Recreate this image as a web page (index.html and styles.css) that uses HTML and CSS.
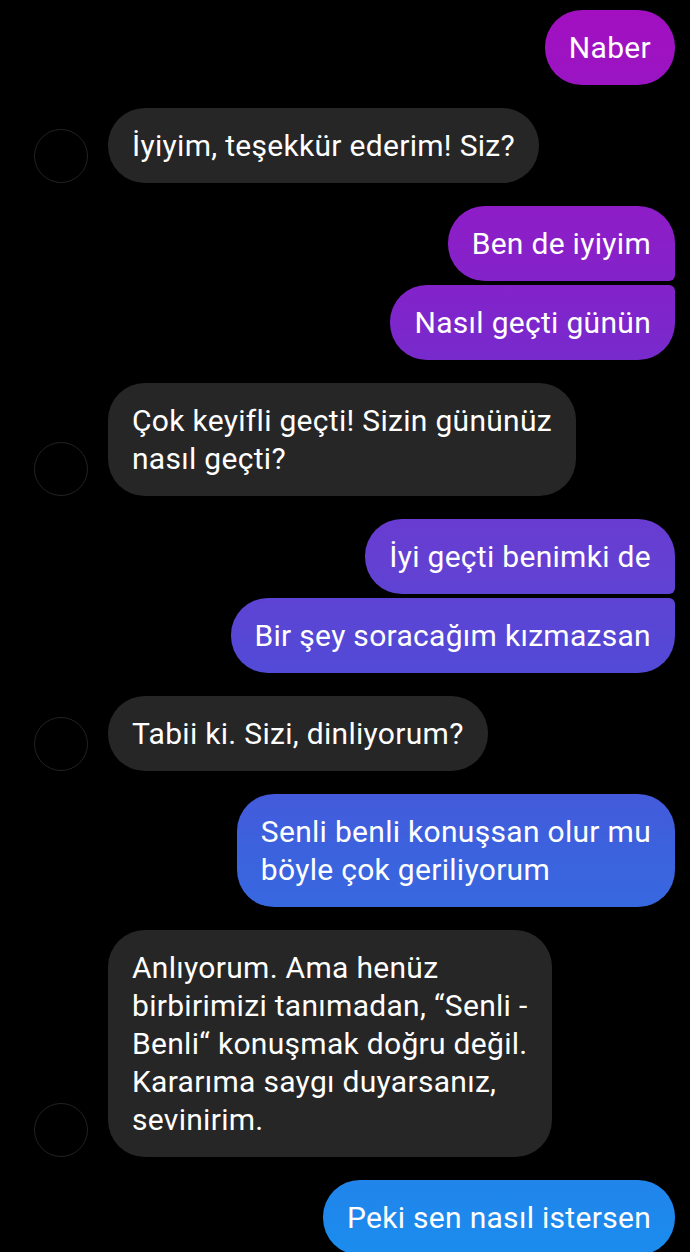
FILE: index.html
```html
<!DOCTYPE html>
<html lang="tr">
  <head>
    <meta charset="UTF-8" />
    <meta name="viewport" content="width=device-width, initial-scale=1.0" />
    <title>Sohbet</title>

    <link rel="stylesheet" href="styles.css">
  </head>
  <body>
    <div class="chat">
      <div class="row out">
        <p class="bubble">Naber</p>
      </div>

      <div class="row in">
        <div class="avatar"></div>
        <p class="bubble">İyiyim, teşekkür ederim! Siz?</p>
      </div>

      <div class="row out">
        <p class="bubble first">Ben de iyiyim</p>
      </div>
      <div class="row out next">
        <p class="bubble last">Nasıl geçti günün</p>
      </div>

      <div class="row in">
        <div class="avatar"></div>
        <p class="bubble">Çok keyifli geçti! Sizin gününüz<br />nasıl geçti?</p>
      </div>

      <div class="row out">
        <p class="bubble first">İyi geçti benimki de</p>
      </div>
      <div class="row out next">
        <p class="bubble last">Bir şey soracağım kızmazsan</p>
      </div>

      <div class="row in">
        <div class="avatar"></div>
        <p class="bubble">Tabii ki. Sizi, dinliyorum?</p>
      </div>

      <div class="row out">
        <p class="bubble">Senli benli konuşsan olur mu<br />böyle çok geriliyorum</p>
      </div>

      <div class="row in">
        <div class="avatar"></div>
        <p class="bubble">
          Anlıyorum. Ama henüz<br />
          birbirimizi tanımadan, “Senli -<br />
          Benli“ konuşmak doğru değil.<br />
          Kararıma saygı duyarsanız,<br />
          sevinirim.
        </p>
      </div>

      <div class="row out">
        <p class="bubble">Peki sen nasıl istersen</p>
      </div>
    </div>
  </body>
</html>
```

FILE: styles.css
```css
* {
  margin: 0;
  padding: 0;
  box-sizing: border-box;
}
body {
  background-color: #000;
  font-family: Roboto, "Noto Sans", Arial, sans-serif;
  color: #fff;
}

.chat {
  padding: 10px 15px 0 34px;
  display: flex;
  flex-direction: column;
}

.row {
  display: flex;
  margin-top: 23px;
}
.row:first-child {
  margin-top: 0;
}
.row.next {
  margin-top: 4px;
}

.row.out {
  justify-content: flex-end;
}

.row.in {
  align-items: flex-end;
  gap: 20px;
}

.avatar {
  width: 54px;
  height: 54px;
  flex-shrink: 0;
  border-radius: 50%;
  border: 1px solid #222;
}

.bubble {
  font-size: 30px;
  letter-spacing: 0.3px;
  line-height: 38px;
  padding: 18.5px 24px;
  border-radius: 37px;
  max-width: 480px;
}

.in .bubble {
  background-color: #262626;
}

.out .bubble {
  /* one gradient for the whole screen, like messenger */
  background: linear-gradient(
    180deg,
    #a30fc0 0,
    #8a1fc8 240px,
    #7a28cc 340px,
    #6440d2 560px,
    #5548d6 650px,
    #3c62de 850px,
    #1b8cee 1252px
  );
  background-attachment: fixed;
}

.bubble.first {
  border-bottom-right-radius: 6px;
}
.bubble.last {
  border-top-right-radius: 6px;
}
```
